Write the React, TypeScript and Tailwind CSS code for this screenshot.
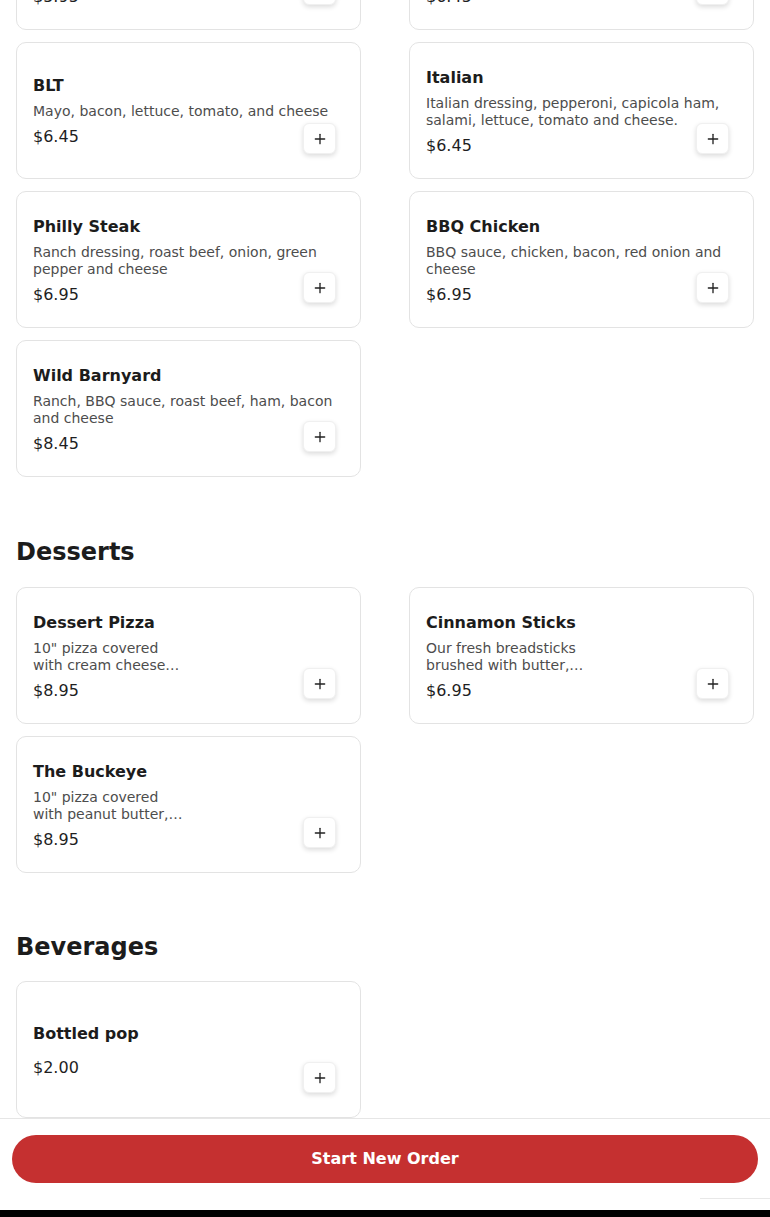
import React from "react";
import { Plus } from "lucide-react";

type Item = { name: string; desc?: string; price: string; clamp?: boolean };

const sandwiches: Item[] = [
  { name: "Ham & Cheese", desc: "Mayo, ham, lettuce, tomato, onion and cheese on a toasted sub.", price: "$5.95" },
  { name: "Club", desc: "Mayo, turkey, ham, bacon, lettuce, tomato and cheese on a sub.", price: "$6.45" },
  { name: "BLT", desc: "Mayo, bacon, lettuce, tomato, and cheese", price: "$6.45" },
  { name: "Italian", desc: "Italian dressing, pepperoni, capicola ham, salami, lettuce, tomato and cheese.", price: "$6.45" },
  { name: "Philly Steak", desc: "Ranch dressing, roast beef, onion, green pepper and cheese", price: "$6.95" },
  { name: "BBQ Chicken", desc: "BBQ sauce, chicken, bacon, red onion and cheese", price: "$6.95" },
  { name: "Wild Barnyard", desc: "Ranch, BBQ sauce, roast beef, ham, bacon and cheese", price: "$8.45" },
];

const desserts: Item[] = [
  { name: "Dessert Pizza", desc: '10" pizza covered with cream cheese frosting, topped with cinnamon and sugar', price: "$8.95", clamp: true },
  { name: "Cinnamon Sticks", desc: "Our fresh breadsticks brushed with butter, cinnamon and sugar, served with icing", price: "$6.95", clamp: true },
  { name: "The Buckeye", desc: '10" pizza covered with peanut butter, chocolate chips and icing', price: "$8.95", clamp: true },
];

const beverages: Item[] = [{ name: "Bottled pop", price: "$2.00" }];

function Card({ item }: { item: Item }) {
  return (
    <div className="relative flex h-[137px] flex-col justify-center rounded-[10px] border border-[#e3e3e3] bg-white px-4 pt-[2px]">
      <div className="flex flex-col gap-[5px]">
        <div className="text-[16px] font-bold leading-6 text-[#1c1c1c]">{item.name}</div>
        <div
          className={
            item.clamp
              ? "w-[158px] overflow-hidden text-[14px] leading-[17px] text-[#4d4d4d] line-clamp-2"
              : "text-[14px] leading-[17px] text-[#4d4d4d]"
          }
        >
          {item.desc ?? ""}
        </div>
        <div className="text-[16px] leading-6 text-[#1f1f1f]">{item.price}</div>
      </div>
      <button className="absolute bottom-6 right-6 flex h-[31px] w-[33px] items-center justify-center rounded-md border border-[#f0f0f0] bg-white text-[#222] shadow-[0_2px_5px_rgba(0,0,0,0.14)]">
        <Plus size={16} strokeWidth={2} />
      </button>
    </div>
  );
}

function Grid({ items }: { items: Item[] }) {
  return (
    <div className="grid grid-cols-2 gap-x-12 gap-y-3 px-4">
      {items.map((it) => (
        <Card key={it.name} item={it} />
      ))}
    </div>
  );
}

function Heading({ children, first }: { children: React.ReactNode; first?: boolean }) {
  return (
    <h2
      className={
        first
          ? "mb-[19px] mt-[59px] px-4 text-[24px] font-bold leading-8 text-[#1c1c1c]"
          : "mb-[18px] mt-[58px] px-4 text-[24px] font-bold leading-8 text-[#1c1c1c]"
      }
    >
      {children}
    </h2>
  );
}

export default function App() {
  return (
    <div className="relative flex h-[1217px] w-full flex-col overflow-hidden bg-white font-['DejaVu_Sans',sans-serif]">
      <div className="flex-1 overflow-hidden">
        <div className="-mt-[107px]">
          <Grid items={sandwiches} />
          <Heading first>Desserts</Heading>
          <Grid items={desserts} />
          <Heading>Beverages</Heading>
          <Grid items={beverages} />
        </div>
      </div>
      <div className="relative h-[92px] border-t border-[#e6e6e6] bg-white px-3 pt-4">
        <button className="flex h-12 w-full items-center justify-center rounded-full bg-[#c53030] text-[16px] font-bold text-white">
          Start New Order
        </button>
        <div className="absolute bottom-[11px] right-0 h-px w-[70px] bg-[#e8e8e8]" />
      </div>
      <div className="h-[7px] bg-black" />
    </div>
  );
}
